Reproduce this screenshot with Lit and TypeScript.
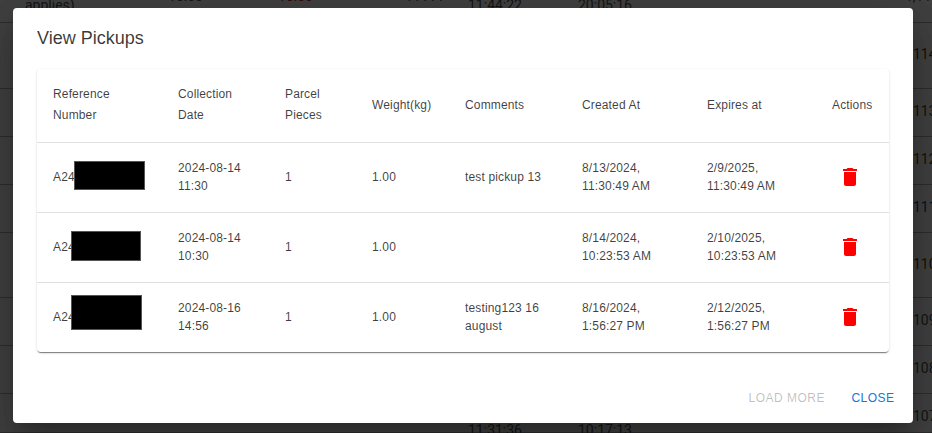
import { LitElement, html, css } from "lit";
import { customElement } from "lit/decorators.js";

const deletePath = "M6 19c0 1.1.9 2 2 2h8c1.1 0 2-.9 2-2V7H6v12zM19 4h-3.5l-1-1h-5l-1 1H5v2h14V4z";

const columns = [
  { label: "Reference Number", wrap: true },
  { label: "Collection Date", wrap: true },
  { label: "Parcel Pieces", wrap: true },
  { label: "Weight(kg)" },
  { label: "Comments" },
  { label: "Created At" },
  { label: "Expires at" },
  { label: "Actions" },
];

const pickups = [
  {
    mask: { left: 37, top: 18, width: 71, height: 29 },
    date: ["2024-08-14", "11:30"],
    comment: "test pickup 13",
    created: ["8/13/2024,", "11:30:49 AM"],
    expires: ["2/9/2025,", "11:30:49 AM"],
  },
  {
    mask: { left: 34, top: 18, width: 70, height: 30 },
    date: ["2024-08-14", "10:30"],
    comment: "",
    created: ["8/14/2024,", "10:23:53 AM"],
    expires: ["2/10/2025,", "10:23:53 AM"],
  },
  {
    mask: { left: 34, top: 12, width: 71, height: 35 },
    date: ["2024-08-16", "14:56"],
    comment: "testing123 16 august",
    created: ["8/16/2024,", "1:56:27 PM"],
    expires: ["2/12/2025,", "1:56:27 PM"],
  },
];

// the table of the page underneath, only its edges show round the dialog
const pageRows = [
  { height: 23, id: "1,110", tone: "" },
  { height: 66, id: "114", tone: "amber" },
  { height: 48, id: "113", tone: "amber" },
  { height: 48, id: "112", tone: "amber" },
  { height: 48, id: "111", tone: "blue" },
  { height: 65, id: "110", tone: "amber" },
  { height: 48, id: "109", tone: "" },
  { height: 48, id: "108", tone: "" },
  { height: 39, id: "107", tone: "" },
];

@customElement("app-root")
export class AppRoot extends LitElement {
  static styles = css`
    :host {
      display: block;
      height: 433px;
      overflow: hidden;
      position: relative;
      font-family: "Liberation Sans", Arial, sans-serif;
      background: #fff;
    }

    .page-row {
      display: grid;
      grid-template-columns: 143px 110px 127px 63px 110px 335px 30px;
      padding-left: 25px;
      padding-bottom: 3px;
      align-items: center;
      box-sizing: border-box;
      border-bottom: 1px solid #b4b4b4;
      font-family: Roboto, sans-serif;
      font-size: 14px;
      color: #555;
      white-space: nowrap;
    }

    .page-row.first {
      overflow: hidden;
      align-items: start;
      padding-bottom: 0;
    }

    .page-row .id {
      grid-column: 7;
    }

    .page-row.first .id {
      margin-top: -12px;
      margin-left: -8px;
    }

    .amber {
      color: #5c4a00;
    }

    .blue {
      color: #0f4c81;
    }

    .red {
      color: #c62828;
    }

    .clip-b {
      margin-top: -12px;
    }

    .clip-c {
      margin-top: -3px;
    }

    .tail {
      grid-column: 5;
      margin-top: 28px;
    }

    .tail + .tail {
      grid-column: 6;
    }

    .backdrop {
      position: absolute;
      inset: 0;
      background: rgba(0, 0, 0, 0.75);
    }

    .dialog {
      position: absolute;
      left: 13px;
      top: 8px;
      width: 900px;
      height: 415px;
      box-sizing: border-box;
      display: flex;
      flex-direction: column;
      background: #fff;
      border-radius: 4px;
      box-shadow: 0 11px 15px -7px rgba(0, 0, 0, 0.2),
        0 24px 38px 3px rgba(0, 0, 0, 0.14), 0 9px 46px 8px rgba(0, 0, 0, 0.12);
    }

    h2 {
      margin: 0;
      padding: 17px 24px 0;
      height: 61px;
      box-sizing: border-box;
      font-size: 18px;
      font-weight: 400;
      line-height: 27px;
      color: rgba(0, 0, 0, 0.78);
    }

    .content {
      flex: 1;
      padding: 0 24px;
    }

    .card {
      width: 852px;
      border-radius: 4px;
      background: #fff;
      box-shadow: 0 2px 1px -1px rgba(0, 0, 0, 0.38),
        0 1px 1px 0 rgba(0, 0, 0, 0.14), 0 1px 3px 0 rgba(0, 0, 0, 0.12);
    }

    table {
      width: 852px;
      table-layout: fixed;
      border-collapse: collapse;
      font-size: 12px;
      letter-spacing: 0.15px;
      color: rgba(0, 0, 0, 0.76);
    }

    col:nth-child(1) { width: 125px; }
    col:nth-child(2) { width: 107px; }
    col:nth-child(3) { width: 87px; }
    col:nth-child(4) { width: 93px; }
    col:nth-child(5) { width: 117px; }
    col:nth-child(6) { width: 125px; }
    col:nth-child(7) { width: 125px; }
    col:nth-child(8) { width: 73px; }

    th,
    td {
      padding: 0 16px;
      text-align: left;
      font-weight: 400;
      vertical-align: middle;
    }

    th {
      line-height: 21px;
    }

    td {
      line-height: 18px;
    }

    thead tr {
      height: 73px;
    }

    tbody tr {
      height: 70px;
    }

    tr {
      border-bottom: 1px solid #e0e0e0;
    }

    tbody tr:last-child {
      border-bottom: 0;
    }

    .ref {
      position: relative;
    }

    .mask {
      position: absolute;
      box-sizing: border-box;
      background: #000;
      border: 1px solid #555;
    }

    .action {
      padding: 0;
      text-align: center;
    }

    .action svg {
      display: block;
      width: 24px;
      height: 24px;
      margin: 0 auto 0 22px;
      fill: #f00;
    }

    .actions {
      display: flex;
      justify-content: flex-end;
      align-items: center;
      gap: 8px;
      padding: 8px;
    }

    button {
      min-width: 64px;
      padding: 6px 8px;
      border: 0;
      background: none;
      font: inherit;
      font-size: 12px;
      line-height: 21px;
      letter-spacing: 0.5px;
      text-transform: uppercase;
      color: #1976d2;
    }

    button:disabled {
      color: rgba(0, 0, 0, 0.26);
    }
  `;

  private lines(parts: string[]) {
    return parts.map((part, i) => html`${i ? html`<br />` : null}${part}`);
  }

  private renderPageRow(row: (typeof pageRows)[number], index: number) {
    return html`
      <div
        class="page-row ${index === 0 ? "first" : ""}"
        style="height:${row.height}px"
      >
        ${index === 0
          ? html`
              <span class="clip-c">applies)</span>
              <span class="clip-b">16:00</span>
              <span class="clip-b red">16:00</span>
              <span class="clip-b">11111</span>
              <span class="clip-c">11:44:22</span>
              <span class="clip-c">20:05:16</span>
            `
          : null}
        ${index === pageRows.length - 1
          ? html`<span class="tail">11:31:36</span><span class="tail">10:17:13</span>`
          : null}
        <span class="id ${row.tone}">${row.id}</span>
      </div>
    `;
  }

  render() {
    return html`
      ${pageRows.map((row, i) => this.renderPageRow(row, i))}
      <div class="backdrop"></div>
      <div class="dialog">
        <h2>View Pickups</h2>
        <div class="content">
          <div class="card">
            <table>
              <colgroup>${columns.map(() => html`<col />`)}</colgroup>
              <thead>
                <tr>${columns.map((c) => html`<th>${c.label}</th>`)}</tr>
              </thead>
              <tbody>
                ${pickups.map(
                  (p) => html`
                    <tr>
                      <td class="ref">
                        A24
                        <div
                          class="mask"
                          style="left:${p.mask.left}px;top:${p.mask.top}px;width:${p.mask.width}px;height:${p.mask.height}px"
                        ></div>
                      </td>
                      <td>${this.lines(p.date)}</td>
                      <td>1</td>
                      <td>1.00</td>
                      <td>${p.comment}</td>
                      <td>${this.lines(p.created)}</td>
                      <td>${this.lines(p.expires)}</td>
                      <td class="action">
                        <svg viewBox="0 0 24 24"><path d=${deletePath}></path></svg>
                      </td>
                    </tr>
                  `
                )}
              </tbody>
            </table>
          </div>
        </div>
        <div class="actions">
          <button disabled>Load more</button>
          <button>Close</button>
        </div>
      </div>
    `;
  }
}
